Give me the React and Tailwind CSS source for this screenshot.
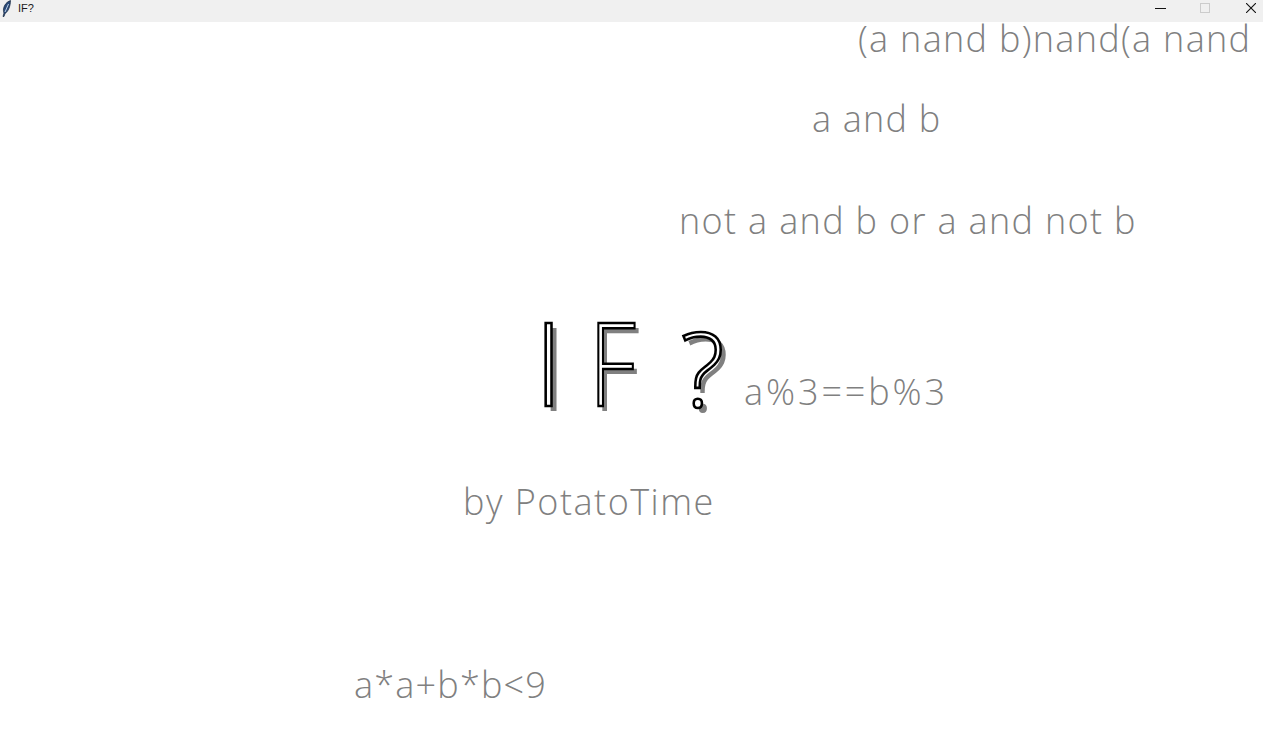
const font = { fontFamily: '"Open Sans", "Noto Sans", sans-serif' };

function Word({ children, className }) {
  return (
    <span
      className={`absolute whitespace-nowrap font-[340] text-[36px] text-[#808080] font-['Open_Sans',sans-serif] ${className}`}
    >
      {children}
    </span>
  );
}

function Feather() {
  return (
    <svg width="10" height="17" viewBox="0 0 10 17" className="ml-0.5 shrink-0">
      <path d="M8.5 0.5C5 1.5 2 5 1.5 9C1.3 11 1.6 12.5 2 13L1 16.5L2 16.5L3 13.5C6 12 8.5 6 8.5 0.5Z" fill="#2b4a78" stroke="#16263f" strokeWidth="0.7" />
      <path d="M6.5 4L3 12" stroke="#cfe0f2" strokeWidth="0.9" fill="none" />
    </svg>
  );
}

function Letter({ children, className }) {
  return (
    <span
      className={`block leading-none font-light text-white font-['Open_Sans',sans-serif] [-webkit-text-stroke:2.6px_#000] [text-shadow:5px_5px_0_#808080] ${className}`}
    >
      {children}
    </span>
  );
}

export default function App() {
  return (
    <div className="flex h-[733px] w-[1263px] flex-col overflow-hidden bg-white" style={font}>
      <header className="flex h-[22px] shrink-0 items-start bg-[#f0f0f0]">
        <Feather />
        <span className="ml-[6px] mt-[2px] text-[11px] leading-[12px] text-[#1a1a1a] font-['Liberation_Sans',sans-serif]">IF?</span>
        <div className="ml-auto mr-[7px] mt-[3px] flex items-center text-black">
          <svg width="11" height="10" viewBox="0 0 11 10">
            <path d="M0 5.5H11" stroke="#111" strokeWidth="1" />
          </svg>
          <svg width="10" height="10" viewBox="0 0 10 10" className="ml-[34px]">
            <rect x="0.5" y="0.5" width="9" height="9" fill="none" stroke="#cccccc" strokeWidth="1" />
          </svg>
          <svg width="10" height="10" viewBox="0 0 10 10" className="ml-[36px]">
            <path d="M0 0L10 10M10 0L0 10" stroke="#111" strokeWidth="1.1" />
          </svg>
        </div>
      </header>
      <main className="relative flex-1">
        <Word className="left-[858px] top-0 leading-[34px] tracking-[1.3px]">(a nand b)nand(a nand</Word>
        <Word className="left-[812px] top-[79px] leading-none tracking-[1.2px]">a and b</Word>
        <Word className="left-[679px] top-[181px] leading-none tracking-[1.33px]">not a and b or a and not b</Word>
        <div className="absolute left-[534px] top-[281px] flex items-start">
          <Letter className="text-[116px]">I</Letter>
          <Letter className="ml-[26px] text-[116px] origin-left scale-x-[0.8]">F</Letter>
          <Letter className="ml-[33px] mt-[12px] text-[104px]">?</Letter>
        </div>
        <Word className="left-[744px] top-[352px] leading-none tracking-[2.9px]">a%3==b%3</Word>
        <Word className="left-[463px] top-[462px] leading-none tracking-[1.5px]">by PotatoTime</Word>
        <Word className="left-[354px] top-[645px] leading-none tracking-[1.2px]">a*a+b*b&lt;9</Word>
      </main>
    </div>
  );
}
